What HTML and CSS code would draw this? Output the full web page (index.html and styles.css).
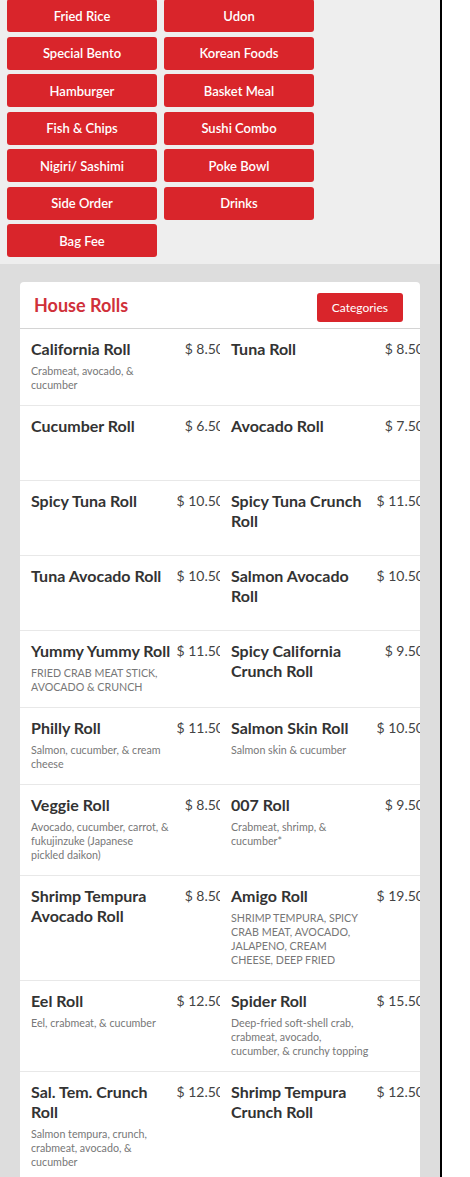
FILE: index.html
```html
<html>
    <head>
        <meta charset="utf-8">
        <link rel="stylesheet" href="styles.css">
    </head>
    <body>
        <div id="page">

            <div class="cats">
                <a class="cat">Fried Rice</a>
                <a class="cat">Udon</a>
                <a class="cat">Special Bento</a>
                <a class="cat">Korean Foods</a>
                <a class="cat">Hamburger</a>
                <a class="cat">Basket Meal</a>
                <a class="cat">Fish &amp; Chips</a>
                <a class="cat">Sushi Combo</a>
                <a class="cat">Nigiri/ Sashimi</a>
                <a class="cat">Poke Bowl</a>
                <a class="cat">Side Order</a>
                <a class="cat">Drinks</a>
                <a class="cat">Bag Fee</a>
            </div>

            <div class="menu">
                <div class="card">
                    <div class="cardHead">
                        <h2>House Rolls</h2>
                        <button class="catBtn">Categories</button>
                    </div>

                    <div class="row">
                        <div class="item">
                            <div class="info">
                                <div class="name">California Roll</div>
                                <div class="desc">Crabmeat, avocado, &amp; cucumber</div>
                            </div>
                            <div class="price">$ 8.50</div>
                        </div>
                        <div class="item">
                            <div class="info"><div class="name">Tuna Roll</div></div>
                            <div class="price">$ 8.50</div>
                        </div>
                    </div>

                    <div class="row">
                        <div class="item">
                            <div class="info"><div class="name">Cucumber Roll</div></div>
                            <div class="price">$ 6.50</div>
                        </div>
                        <div class="item">
                            <div class="info"><div class="name">Avocado Roll</div></div>
                            <div class="price">$ 7.50</div>
                        </div>
                    </div>

                    <div class="row">
                        <div class="item">
                            <div class="info"><div class="name">Spicy Tuna Roll</div></div>
                            <div class="price">$ 10.50</div>
                        </div>
                        <div class="item">
                            <div class="info"><div class="name">Spicy Tuna Crunch Roll</div></div>
                            <div class="price">$ 11.50</div>
                        </div>
                    </div>

                    <div class="row">
                        <div class="item">
                            <div class="info"><div class="name">Tuna Avocado Roll</div></div>
                            <div class="price">$ 10.50</div>
                        </div>
                        <div class="item">
                            <div class="info"><div class="name">Salmon Avocado Roll</div></div>
                            <div class="price">$ 10.50</div>
                        </div>
                    </div>

                    <div class="row">
                        <div class="item">
                            <div class="info">
                                <div class="name">Yummy Yummy Roll</div>
                                <div class="desc">FRIED CRAB MEAT STICK, AVOCADO &amp; CRUNCH</div>
                            </div>
                            <div class="price">$ 11.50</div>
                        </div>
                        <div class="item">
                            <div class="info"><div class="name">Spicy California Crunch Roll</div></div>
                            <div class="price">$ 9.50</div>
                        </div>
                    </div>

                    <div class="row">
                        <div class="item">
                            <div class="info">
                                <div class="name">Philly Roll</div>
                                <div class="desc">Salmon, cucumber, &amp; cream cheese</div>
                            </div>
                            <div class="price">$ 11.50</div>
                        </div>
                        <div class="item">
                            <div class="info">
                                <div class="name">Salmon Skin Roll</div>
                                <div class="desc">Salmon skin &amp; cucumber</div>
                            </div>
                            <div class="price">$ 10.50</div>
                        </div>
                    </div>

                    <div class="row">
                        <div class="item">
                            <div class="info">
                                <div class="name">Veggie Roll</div>
                                <div class="desc">Avocado, cucumber, carrot, &amp; fukujinzuke (Japanese pickled daikon)</div>
                            </div>
                            <div class="price">$ 8.50</div>
                        </div>
                        <div class="item">
                            <div class="info">
                                <div class="name">007 Roll</div>
                                <div class="desc">Crabmeat, shrimp, &amp; cucumber*</div>
                            </div>
                            <div class="price">$ 9.50</div>
                        </div>
                    </div>

                    <div class="row">
                        <div class="item">
                            <div class="info"><div class="name">Shrimp Tempura Avocado Roll</div></div>
                            <div class="price">$ 8.50</div>
                        </div>
                        <div class="item">
                            <div class="info">
                                <div class="name">Amigo Roll</div>
                                <div class="desc">SHRIMP TEMPURA, SPICY CRAB MEAT, AVOCADO, JALAPENO, CREAM CHEESE, DEEP FRIED</div>
                            </div>
                            <div class="price">$ 19.50</div>
                        </div>
                    </div>

                    <div class="row">
                        <div class="item">
                            <div class="info">
                                <div class="name">Eel Roll</div>
                                <div class="desc">Eel, crabmeat, &amp; cucumber</div>
                            </div>
                            <div class="price">$ 12.50</div>
                        </div>
                        <div class="item">
                            <div class="info">
                                <div class="name">Spider Roll</div>
                                <div class="desc">Deep-fried soft-shell crab, crabmeat, avocado, cucumber, &amp; crunchy topping</div>
                            </div>
                            <div class="price">$ 15.50</div>
                        </div>
                    </div>

                    <div class="row">
                        <div class="item">
                            <div class="info">
                                <div class="name">Sal. Tem. Crunch Roll</div>
                                <div class="desc">Salmon tempura, crunch, crabmeat, avocado, &amp; cucumber</div>
                            </div>
                            <div class="price">$ 12.50</div>
                        </div>
                        <div class="item">
                            <div class="info"><div class="name">Shrimp Tempura Crunch Roll</div></div>
                            <div class="price">$ 12.50</div>
                        </div>
                    </div>

                </div>
            </div>
        </div>
    </body>
</html>
```

FILE: styles.css
```css
body {
    margin: 0;
    background-color: #ffffff;
    font-family: Lato, "Open Sans", sans-serif;
}

#page {
    width: 440px;
    border-right: 2px solid #000000;
}

.cats {
    display: grid;
    grid-template-columns: 150px 150px;
    column-gap: 7px;
    row-gap: 4.5px;
    padding: 0 7px 7px 7px;
    background-color: #eeeeee;
}

.cats .cat:first-child,
.cats .cat:nth-child(2) {
    margin-top: -1px;
}

.cat {
    display: flex;
    align-items: center;
    justify-content: center;
    height: 33px;
    border-radius: 3px;
    background-color: #d9252b;
    color: #ffffff;
    font-size: 13px;
    font-weight: 600;
}

.menu {
    background-color: #dddddd;
    padding: 18px 20px 0 20px;
}

.card {
    width: 400px;
    background-color: #ffffff;
    border-radius: 4px 4px 0 0;
    overflow: hidden;
}

.cardHead {
    display: flex;
    justify-content: space-between;
    align-items: flex-start;
    box-sizing: border-box;
    height: 47px;
    padding: 11px 17px 0 14px;
    border-bottom: 1px solid #d4d4d4;
}

.cardHead h2 {
    margin: 0;
    font-size: 18px;
    line-height: 24px;
    font-weight: 700;
    color: #d0313a;
}

.catBtn {
    height: 29px;
    padding: 0 15px;
    border: none;
    border-radius: 3px;
    background-color: #d9252b;
    color: #ffffff;
    font-family: Lato, sans-serif;
    font-size: 12px;
}

.row {
    display: grid;
    grid-template-columns: 200px 200px;
    border-bottom: 1px solid #e8e8e8;
}

.item {
    display: flex;
    box-sizing: border-box;
    min-height: 74px;
    padding: 10px 0 13px 11px;
    overflow: hidden;
}

.info {
    flex: 0 0 141px;
}

.name {
    font-size: 16px;
    line-height: 20px;
    font-weight: 700;
    color: #333333;
}

.desc {
    max-width: 138px;
    margin-top: 5px;
    font-size: 10.7px;
    line-height: 14px;
    color: #777777;
}

.price {
    margin-left: auto;
    margin-right: -4px;
    font-size: 14px;
    line-height: 20px;
    color: #444444;
    white-space: nowrap;
}
```
